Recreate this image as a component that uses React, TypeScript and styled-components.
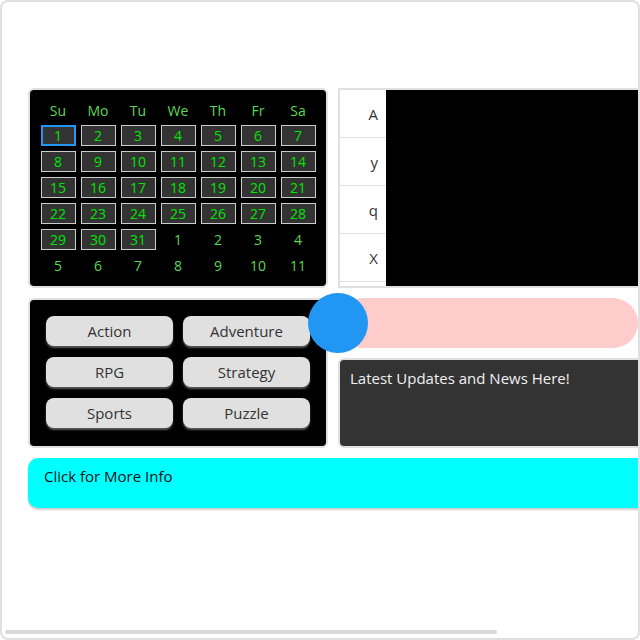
import React from "react";
import styled, { createGlobalStyle } from "styled-components";

const Global = createGlobalStyle`
  html, body { margin: 0; padding: 0; background: #ffffff; }
  body { font-family: "Open Sans", "Noto Sans", sans-serif; }
  * { box-sizing: border-box; }
`;

const Frame = styled.div`
  position: relative;
  width: 640px;
  height: 640px;
  border: 2px solid #e0e0e0;
  border-radius: 8px;
  background: #fff;
  overflow: hidden;
`;

const Scroller = styled.div`
  width: 100%;
  height: 100%;
  overflow: hidden;
`;

const ScrollThumb = styled.div`
  position: absolute;
  left: 3px;
  bottom: 4px;
  height: 4px;
  border-radius: 2px;
  background: #d9d9d9;
`;

const Layout = styled.div`
  display: grid;
  grid-template-columns: 300px 450px;
  grid-template-rows: 200px 150px 50px;
  gap: 10px;
  padding: 86px 26px 0 26px;
  width: max-content;
`;

const CalendarPanel = styled.div`
  background: #000;
  border: 2px solid #e0e0e0;
  border-radius: 6px;
  padding: 10px 0 0;
  display: flex;
  justify-content: center;
`;

const CalGrid = styled.div`
  display: grid;
  grid-template-columns: repeat(7, 35px);
  grid-template-rows: 20px repeat(6, 21px);
  gap: 5px;
  font-size: 14px;
`;

const DayName = styled.div`
  display: flex;
  align-items: center;
  justify-content: center;
  color: #5ad85a;
`;

const DayCell = styled.div<{ $selected?: boolean; $boxed?: boolean }>`
  display: flex;
  align-items: center;
  justify-content: center;
  color: ${(p) => (p.$boxed ? "#00e600" : "#5ad85a")};
  background: ${(p) => (p.$boxed ? "#333" : "transparent")};
  border: ${(p) =>
    p.$selected ? "2px solid #2196f3" : p.$boxed ? "1px solid #cccccc" : "none"};
  line-height: 1;
`;

const TablePanel = styled.div`
  background: #000;
  border: 2px solid #e0e0e0;
  overflow: hidden;
`;

const LabelColumn = styled.div`
  width: 46px;
  background: #fff;
  display: flex;
  flex-direction: column;
`;

const LabelRow = styled.div`
  height: 48px;
  flex: none;
  display: flex;
  align-items: center;
  justify-content: flex-end;
  padding-right: 8px;
  border-bottom: 1px solid #e0e0e0;
  font-size: 15px;
  color: #333;
`;

const GenrePanel = styled.div`
  background: #000;
  border: 2px solid #e0e0e0;
  border-radius: 6px;
  padding: 16px;
  display: grid;
  grid-template-columns: 1fr 1fr;
  grid-auto-rows: 30px;
  column-gap: 10px;
  row-gap: 11px;
  align-content: start;
`;

const GenreButton = styled.button`
  font-family: inherit;
  font-size: 15px;
  color: #333;
  background: #e0e0e0;
  border: none;
  border-radius: 8px;
  box-shadow: 0 2px 2px #5a5a5a;
  padding: 0;
`;

const RightStack = styled.div`
  display: flex;
  flex-direction: column;
  gap: 10px;
`;

const SliderTrack = styled.div`
  position: relative;
  width: 300px;
  height: 50px;
  flex: none;
  background: #ffcccc;
  border-radius: 25px;
`;

const SliderThumb = styled.div`
  position: absolute;
  left: -30px;
  top: -5px;
  width: 60px;
  height: 60px;
  border-radius: 50%;
  background: #2196f3;
`;

const NewsPanel = styled.div`
  flex: 1;
  background: #333;
  border: 2px solid #e0e0e0;
  border-radius: 6px;
  padding: 8px 10px;
  color: #f0f0f0;
  font-size: 15px;
`;

const InfoBar = styled.div`
  grid-column: 1 / -1;
  background: #00ffff;
  border-radius: 10px;
  box-shadow: 0 2px 2px rgba(0, 0, 0, 0.2);
  padding: 8px 16px;
  color: #111;
  font-size: 15px;
`;

const dayNames = ["Su", "Mo", "Tu", "We", "Th", "Fr", "Sa"];
const genres = ["Action", "Adventure", "RPG", "Strategy", "Sports", "Puzzle"];
const labels = ["A", "y", "q", "X", "m"];

export default function App() {
  const month = Array.from({ length: 31 }, (_, i) => i + 1);
  const next = Array.from({ length: 11 }, (_, i) => i + 1);
  const viewport = 636;
  const contentWidth = 812;
  const thumbWidth = Math.round((viewport * viewport) / contentWidth) - 6;
  return (
    <>
      <Global />
      <Frame>
        <Scroller>
          <Layout>
            <CalendarPanel>
              <CalGrid>
                {dayNames.map((d) => (
                  <DayName key={d}>{d}</DayName>
                ))}
                {month.map((d) => (
                  <DayCell key={"m" + d} $boxed $selected={d === 1}>
                    {d}
                  </DayCell>
                ))}
                {next.map((d) => (
                  <DayCell key={"n" + d}>{d}</DayCell>
                ))}
              </CalGrid>
            </CalendarPanel>
            <TablePanel>
              <LabelColumn>
                {labels.map((l) => (
                  <LabelRow key={l}>{l}</LabelRow>
                ))}
              </LabelColumn>
            </TablePanel>
            <GenrePanel>
              {genres.map((g) => (
                <GenreButton key={g}>{g}</GenreButton>
              ))}
            </GenrePanel>
            <RightStack>
              <SliderTrack>
                <SliderThumb />
              </SliderTrack>
              <NewsPanel>Latest Updates and News Here!</NewsPanel>
            </RightStack>
            <InfoBar>Click for More Info</InfoBar>
          </Layout>
        </Scroller>
        <ScrollThumb style={{ width: thumbWidth }} />
      </Frame>
    </>
  );
}
